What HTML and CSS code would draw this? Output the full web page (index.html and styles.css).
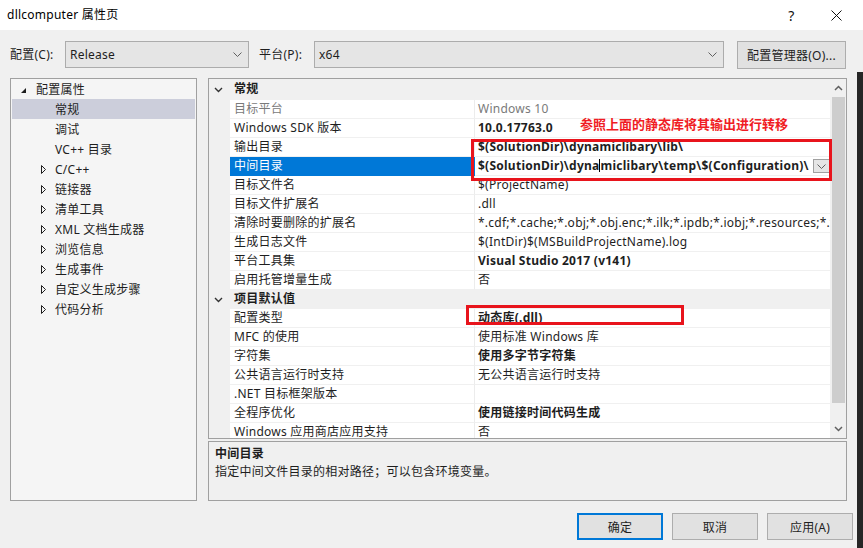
FILE: index.html
```html
<!DOCTYPE html>
<html lang="zh-CN">
<head>
<meta charset="utf-8">
<title>dllcomputer 属性页</title>
<link rel="stylesheet" href="styles.css">
</head>
<body>
<div class="window">
  <header class="titlebar">
    <span class="title">dllcomputer 属性页</span>
    <div class="title-btns">
      <span class="tb-btn tb-help">?</span>
      <span class="tb-btn tb-close"><svg width="11" height="11" viewBox="0 0 11 11"><path d="M0.5 0.5 L10.5 10.5 M10.5 0.5 L0.5 10.5" stroke="#111" stroke-width="1" fill="none"/></svg></span>
    </div>
  </header>

  <div class="toolbar">
    <span class="tlabel tlabel-config">配置(C):</span>
    <div class="combo combo-config"><span class="combo-text">Release</span><svg class="combo-chev" width="9" height="5" viewBox="0 0 9 5"><polyline points="0.5,0.5 4.5,4.5 8.5,0.5" stroke="#606060" fill="none"/></svg></div>
    <span class="tlabel tlabel-platform">平台(P):</span>
    <div class="combo combo-platform"><span class="combo-text">x64</span><svg class="combo-chev" width="9" height="5" viewBox="0 0 9 5"><polyline points="0.5,0.5 4.5,4.5 8.5,0.5" stroke="#606060" fill="none"/></svg></div>
    <button class="btn btn-manager">配置管理器(O)...</button>
  </div>

  <div class="main">
    <nav class="tree">
      <div class="tree-item lvl0"><span class="twisty"><svg width="5" height="5" viewBox="0 0 5 5"><polygon points="5,0 5,5 0,5" fill="#1e1e1e"/></svg></span>配置属性</div>
      <div class="tree-item lvl1 selected"><span class="twisty"></span>常规</div>
      <div class="tree-item lvl1"><span class="twisty"></span>调试</div>
      <div class="tree-item lvl1"><span class="twisty"></span>VC++ 目录</div>
      <div class="tree-item lvl1"><span class="twisty"><svg class="collapsed" width="5" height="9" viewBox="0 0 5 9"><polygon points="0.5,0.5 4.5,4.5 0.5,8.5" stroke="#1e1e1e" fill="none"/></svg></span>C/C++</div>
      <div class="tree-item lvl1"><span class="twisty"><svg class="collapsed" width="5" height="9" viewBox="0 0 5 9"><polygon points="0.5,0.5 4.5,4.5 0.5,8.5" stroke="#1e1e1e" fill="none"/></svg></span>链接器</div>
      <div class="tree-item lvl1"><span class="twisty"><svg class="collapsed" width="5" height="9" viewBox="0 0 5 9"><polygon points="0.5,0.5 4.5,4.5 0.5,8.5" stroke="#1e1e1e" fill="none"/></svg></span>清单工具</div>
      <div class="tree-item lvl1"><span class="twisty"><svg class="collapsed" width="5" height="9" viewBox="0 0 5 9"><polygon points="0.5,0.5 4.5,4.5 0.5,8.5" stroke="#1e1e1e" fill="none"/></svg></span>XML 文档生成器</div>
      <div class="tree-item lvl1"><span class="twisty"><svg class="collapsed" width="5" height="9" viewBox="0 0 5 9"><polygon points="0.5,0.5 4.5,4.5 0.5,8.5" stroke="#1e1e1e" fill="none"/></svg></span>浏览信息</div>
      <div class="tree-item lvl1"><span class="twisty"><svg class="collapsed" width="5" height="9" viewBox="0 0 5 9"><polygon points="0.5,0.5 4.5,4.5 0.5,8.5" stroke="#1e1e1e" fill="none"/></svg></span>生成事件</div>
      <div class="tree-item lvl1"><span class="twisty"><svg class="collapsed" width="5" height="9" viewBox="0 0 5 9"><polygon points="0.5,0.5 4.5,4.5 0.5,8.5" stroke="#1e1e1e" fill="none"/></svg></span>自定义生成步骤</div>
      <div class="tree-item lvl1"><span class="twisty"><svg class="collapsed" width="5" height="9" viewBox="0 0 5 9"><polygon points="0.5,0.5 4.5,4.5 0.5,8.5" stroke="#1e1e1e" fill="none"/></svg></span>代码分析</div>
    </nav>

    <div class="right">
      <div class="grid">
        <div class="grid-body">
          <div class="row cat first"><span class="gutter"><svg width="9" height="6" viewBox="0 0 9 6"><polyline points="1,1 4.5,4.5 8,1" stroke="#333" stroke-width="1.4" fill="none"/></svg></span><span class="name">常规</span><span class="val"></span></div>
          <div class="row disabled"><span class="gutter"></span><span class="name">目标平台</span><span class="val">Windows 10</span></div>
          <div class="row"><span class="gutter"></span><span class="name">Windows SDK 版本</span><span class="val b">10.0.17763.0</span></div>
          <div class="row"><span class="gutter"></span><span class="name">输出目录</span><span class="val b">$(SolutionDir)\dynamiclibary\lib\</span></div>
          <div class="row selected"><span class="gutter"></span><span class="name">中间目录</span><span class="val b editing"><span class="edit-text">$(SolutionDir)\dyna<span class="caret"></span>miclibary\temp\$(Configuration)\</span><span class="drop"><svg width="9" height="5" viewBox="0 0 9 5"><polyline points="0.5,0.5 4.5,4.5 8.5,0.5" stroke="#606060" fill="none"/></svg></span></span></div>
          <div class="row"><span class="gutter"></span><span class="name">目标文件名</span><span class="val">$(ProjectName)</span></div>
          <div class="row"><span class="gutter"></span><span class="name">目标文件扩展名</span><span class="val">.dll</span></div>
          <div class="row"><span class="gutter"></span><span class="name">清除时要删除的扩展名</span><span class="val">*.cdf;*.cache;*.obj;*.obj.enc;*.ilk;*.ipdb;*.iobj;*.resources;*.tlb;*.tli;*.tlh;*.tmp;*.rsp;*.pgc;*.pgd;*.meta</span></div>
          <div class="row"><span class="gutter"></span><span class="name">生成日志文件</span><span class="val">$(IntDir)$(MSBuildProjectName).log</span></div>
          <div class="row"><span class="gutter"></span><span class="name">平台工具集</span><span class="val b">Visual Studio 2017 (v141)</span></div>
          <div class="row"><span class="gutter"></span><span class="name">启用托管增量生成</span><span class="val">否</span></div>
          <div class="row cat"><span class="gutter"><svg width="9" height="6" viewBox="0 0 9 6"><polyline points="1,1 4.5,4.5 8,1" stroke="#333" stroke-width="1.4" fill="none"/></svg></span><span class="name">项目默认值</span><span class="val"></span></div>
          <div class="row"><span class="gutter"></span><span class="name">配置类型</span><span class="val b">动态库(.dll)</span></div>
          <div class="row"><span class="gutter"></span><span class="name">MFC 的使用</span><span class="val">使用标准 Windows 库</span></div>
          <div class="row"><span class="gutter"></span><span class="name">字符集</span><span class="val b">使用多字节字符集</span></div>
          <div class="row"><span class="gutter"></span><span class="name">公共语言运行时支持</span><span class="val">无公共语言运行时支持</span></div>
          <div class="row"><span class="gutter"></span><span class="name">.NET 目标框架版本</span><span class="val"></span></div>
          <div class="row"><span class="gutter"></span><span class="name">全程序优化</span><span class="val b">使用链接时间代码生成</span></div>
          <div class="row"><span class="gutter"></span><span class="name">Windows 应用商店应用支持</span><span class="val">否</span></div>
        </div>
        <div class="scrollbar">
          <div class="sb-btn"><svg width="9" height="6" viewBox="0 0 9 6"><polyline points="1,5 4.5,1.5 8,5" stroke="#606060" stroke-width="1.5" fill="none"/></svg></div>
          <div class="sb-thumb"></div>
          <div class="sb-space"></div>
          <div class="sb-btn"><svg width="9" height="6" viewBox="0 0 9 6"><polyline points="1,1 4.5,4.5 8,1" stroke="#606060" stroke-width="1.5" fill="none"/></svg></div>
        </div>

        <div class="anno anno-box box-dirs"></div>
        <div class="anno anno-box box-type"></div>
        <div class="anno anno-note">参照上面的静态库将其输出进行转移</div>
      </div>

      <div class="desc">
        <div class="desc-title">中间目录</div>
        <div class="desc-text">指定中间文件目录的相对路径；可以包含环境变量。</div>
      </div>
    </div>
  </div>

  <div class="footer">
    <button class="btn dlg-btn default">确定</button>
    <button class="btn dlg-btn">取消</button>
    <button class="btn dlg-btn">应用(A)</button>
  </div>
</div>
<div class="side-strip"></div>
</body>
</html>
```

FILE: styles.css
```css
* { box-sizing: border-box; margin: 0; padding: 0; }

html, body { width: 863px; height: 548px; overflow: hidden; }

body {
  position: relative;
  background: #f0f0f0;
  font-family: "Noto Sans", "Noto Sans CJK SC", sans-serif;
  font-size: 12px;
  letter-spacing: 0.25px;
  color: #1e1e1e;
}

/* title bar */
.titlebar {
  height: 30px;
  background: #fff;
  display: flex;
  align-items: center;
  padding-left: 7px;
}
.title { flex: 1; line-height: 16px; color: #000; }
.title-btns { display: flex; align-items: center; padding-right: 4px; }
.tb-btn { width: 45px; height: 30px; display: flex; align-items: center; justify-content: center; }
.tb-help { font-size: 14px; color: #111; }

/* toolbar */
.toolbar {
  height: 48px;
  display: flex;
  align-items: flex-start;
  padding: 11px 0 0 10px;
}
.tlabel { line-height: 27px; }
.tlabel-config { width: 55px; }
.tlabel-platform { width: 55px; margin-left: 10px; }
.combo {
  height: 27px;
  background: #e5e5e5;
  border: 1px solid #acacac;
  display: flex;
  align-items: center;
  padding-left: 4px;
}
.combo-config { width: 184px; }
.combo-platform { width: 410px; }
.combo-chev { margin-left: auto; margin-right: 6px; }
.btn {
  font-family: inherit;
  font-size: 12px;
  letter-spacing: 0.25px;
  color: #1e1e1e;
  background: #e1e1e1;
  border: 1px solid #adadad;
}
.btn-manager { width: 109px; height: 28px; margin-left: 13px; }

/* main area */
.main {
  display: flex;
  gap: 11px;
  padding-left: 10px;
  height: 423px;
}

.tree {
  width: 187px;
  height: 423px;
  border: 1px solid #a0a0a0;
  background: #f5f5f5;
}
.tree-item {
  height: 20px;
  margin: 0 1px;
  display: flex;
  align-items: center;
  white-space: nowrap;
}
.tree-item.lvl0 { padding-left: 8px; }
.tree-item.lvl1 { padding-left: 27px; }
.tree-item.selected { background: #cccedb; }
.twisty { width: 16px; height: 20px; display: flex; align-items: center; }
.lvl0 .twisty svg { margin-left: 1px; margin-top: 2px; }
.lvl1 .twisty svg { margin-left: 2px; }

.right {
  width: 639px;
  display: flex;
  flex-direction: column;
  gap: 2px;
}

.grid {
  position: relative;
  height: 361px;
  border: 1px solid #a0a0a0;
  background: #fff;
  display: flex;
}
.grid-body {
  width: 621px;
  overflow: hidden;
}
.row {
  display: grid;
  grid-template-columns: 21px 245px 355px;
  height: 19px;
}
.row.first { height: 21px; }
.gutter {
  background: #f0f0f0;
  display: flex;
  align-items: center;
  padding-left: 5px;
}
.name, .val {
  line-height: 18px;
  white-space: nowrap;
  overflow: hidden;
  border-bottom: 1px solid #f0f0f0;
}
.name { padding-left: 4px; border-right: 1px solid #ececec; }
.val { padding-left: 3px; }
.b { font-weight: bold; }

.row.cat .name, .row.cat .val { background: #f0f0f0; border-color: #f0f0f0; font-weight: bold; }
.row.first .name, .row.first .val { line-height: 20px; }
.row.disabled .name, .row.disabled .val { color: #7a7a7a; }
.row.selected .name { background: #0078d7; color: #fff; border-color: #0078d7; }

.val.editing { display: flex; align-items: center; }
.edit-text { overflow: hidden; white-space: nowrap; }
.caret {
  display: inline-block;
  width: 1px;
  height: 13px;
  background: #000;
  vertical-align: -2px;
}
.drop {
  flex: none;
  margin-left: auto;
  width: 17px;
  height: 14px;
  background: #e5e5e5;
  border: 1px solid #a0a0a0;
  display: flex;
  align-items: center;
  justify-content: center;
}

.scrollbar {
  width: 16px;
  background: #f0f0f0;
  display: flex;
  flex-direction: column;
}
.sb-btn { height: 18px; display: flex; align-items: center; justify-content: center; }
.sb-thumb { height: 306px; margin: 0 1px 0 2px; background: #cdcdcd; }
.sb-space { flex: 1; }

/* annotations (drawn over the grid) */
.anno { position: absolute; }
.anno-box { border: 3px solid #e8141c; }
.box-dirs { left: 262px; top: 60px; width: 361px; height: 42px; }
.box-type { left: 257px; top: 226px; width: 218px; height: 20px; }
.anno-note {
  left: 371px;
  top: 37px;
  line-height: 16px;
  font-size: 13px;
  font-weight: bold;
  letter-spacing: 0;
  color: #f01c24;
  white-space: nowrap;
}

/* description */
.desc {
  height: 60px;
  border: 1px solid #a0a0a0;
  padding: 3px 6px;
}
.desc-title { font-weight: bold; line-height: 18px; }
.desc-text { line-height: 18px; }

/* footer */
.footer {
  display: flex;
  gap: 9px;
  padding: 12px 0 0 577px;
}
.dlg-btn { width: 86px; height: 27px; }
.dlg-btn.default { border: 2px solid #0078d7; }

.side-strip {
  position: absolute;
  top: 72px;
  right: 0;
  bottom: 0;
  width: 6px;
  background: #262626;
}
```
